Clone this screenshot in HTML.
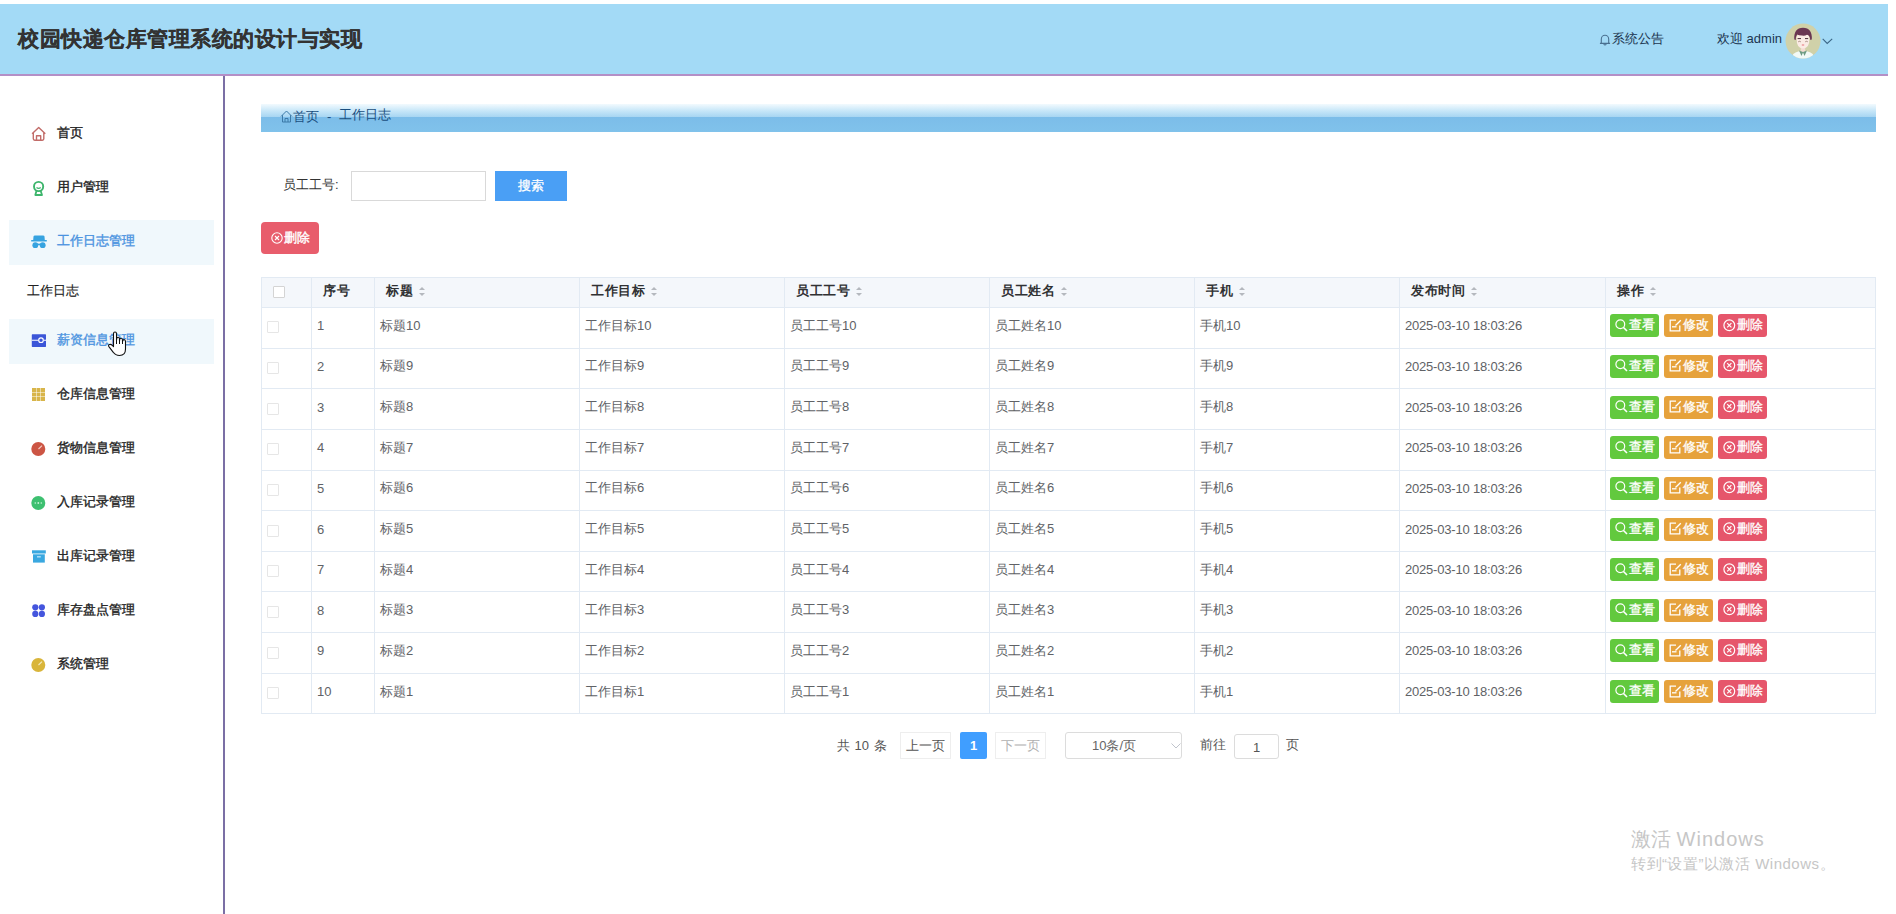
<!DOCTYPE html>
<html><head><meta charset="utf-8">
<style>
*{box-sizing:border-box;margin:0;padding:0}
html,body{width:1896px;height:914px;overflow:hidden;background:#fff;font-family:"Liberation Sans",sans-serif;}
.a{position:absolute;white-space:nowrap}
#hdr{position:absolute;left:0;top:4px;width:1888px;height:72px;background:#a3daf6;border-bottom:2px solid #b48fc6}
#title{left:18px;top:20px;letter-spacing:0.5px;font-size:21px;font-weight:bold;color:#333;-webkit-text-stroke:0.25px #333;line-height:30px}
#vline{position:absolute;left:223px;top:76px;width:2px;height:838px;background:#7b6fa5}
.mi{position:absolute;left:0;width:224px;height:20px;font-size:13px;line-height:20px;color:#222;-webkit-text-stroke-width:0.35px}
.mi .t{position:absolute;left:57px;top:0}
.ic{position:absolute;left:0;top:0}
.hl{position:absolute;left:9px;width:205px;height:45px;background:#f0f8fc}
.blue{color:#4a93e0}
#bc{left:261px;top:104px;width:1615px;height:28px;background:linear-gradient(#f2fafe 0%,#c6e6f8 25%,#a6d5f2 47%,#7cbde9 48%,#80c2eb 100%)}

.bct{font-size:13px;line-height:20px;color:#1a4f80}
table#tb{position:absolute;left:261px;top:276.5px;width:1614px;border-collapse:collapse;table-layout:fixed;font-size:13px;color:#606266}
#tb th,#tb td{border:1px solid #e2eaf3;text-align:left;white-space:nowrap;overflow:hidden}
#tb th{height:30.5px;background:#f4f7fb;color:#303133;font-weight:bold;font-size:13px;letter-spacing:0.5px;padding:0 0 2px 11px}
#tb td{height:40.65px;padding:0 0 4px 5px;vertical-align:middle}
.cb{display:inline-block;width:12px;height:12px;border:1px solid #d4d4d4;border-radius:1px;background:#fff;vertical-align:middle}
.cbr{border-color:#e6e6e6}
.srt{display:inline-block;position:relative;width:10px;height:14px;margin-left:5px;vertical-align:middle}
.srt i{position:absolute;left:1px;border-left:3.8px solid transparent;border-right:3.8px solid transparent}
.srt .up{top:2px;border-bottom:3.6px solid #b4b8be}
.srt .dn{top:8.5px;border-top:3.6px solid #b4b8be}
.ops{padding-left:4px!important}
.btn{display:inline-block;position:relative;width:49px;height:23px;border-radius:3px;color:#fff;font-size:13px;line-height:21px;padding-left:19px;-webkit-text-stroke-width:0.3px;margin-right:5px;vertical-align:middle}
.btn svg{position:absolute;left:5px;top:4.5px}
.btn.g{background:#62c93e}.btn.o{background:#e6a23c}.btn.r{background:#e6566b}
.pg{font-size:13px;line-height:20px}
.pgb{height:27px;border:1px solid #eeeeee;font-size:13px;line-height:25px;text-align:center}
</style></head><body>
<div id="hdr">
  <div class="a" id="title">校园快递仓库管理系统的设计与实现</div>
</div>
<!-- header right -->
<svg class="a" style="left:1599px;top:33px" width="12" height="13" viewBox="0 0 12 13"><path d="M2.3 9.6 V6.2 A3.7 3.9 0 0 1 9.7 6.2 V9.6 L10.6 10.4 H1.4 Z" fill="none" stroke="#4a7090" stroke-width="1.1" stroke-linejoin="round"/><path d="M4.6 11.3 Q6 12.6 7.4 11.3" fill="none" stroke="#4a7090" stroke-width="1.1"/></svg>
<div class="a" style="left:1612px;top:29px;font-size:13px;line-height:20px;color:#1c3550">系统公告</div>
<div class="a" style="left:1717px;top:29px;font-size:13px;line-height:20px;color:#1c3550">欢迎 admin</div>
<svg class="a" style="left:1785px;top:23px" width="36" height="36" viewBox="0 0 36 36">
  <defs><clipPath id="cc"><circle cx="18" cy="18" r="17.5"/></clipPath></defs>
  <circle cx="18" cy="18" r="17.5" fill="#d0d1a9"/>
  <g clip-path="url(#cc)">
    <ellipse cx="18" cy="33" rx="10.5" ry="5" fill="#f2f9f6"/>
    <rect x="15.8" y="23" width="4.4" height="6" fill="#f3dcd2"/>
    <path d="M14 27.5 L16.5 33 L18 29.5 L19.5 33 L22 27.5 L18 29 Z" fill="#6f9c84"/>
    <path d="M11.6 15 Q11.4 25.5 18 25.5 Q24.6 25.5 24.4 15 Q24 10 18 10 Q12 10 11.6 15 Z" fill="#fbebe5"/>
    <path d="M9.3 16.5 Q8.5 5 18 4.8 Q27.5 5 26.8 16.5 L25.3 17 Q25 12.5 22 11.8 Q20 13 17 12.6 Q13.5 12.3 12.2 11.5 Q10.8 13 10.8 17 Z" fill="#6a3652"/>
    <path d="M12.6 15.6 H16 M20 15.6 H23.2" stroke="#4a3038" stroke-width="1"/>
    <path d="M13.2 18.8 Q14.5 17.8 15.8 18.8 M20.2 18.8 Q21.5 17.8 22.8 18.8" stroke="#8a6a60" stroke-width="0.7" fill="none"/>
    <ellipse cx="18" cy="22" rx="1.4" ry="0.8" fill="#e98c93"/>
  </g>
</svg>
<svg class="a" style="left:1822px;top:38px" width="11" height="7" viewBox="0 0 11 7"><path d="M0.7 0.8 L5.2 5.5 L10.2 0.8" fill="none" stroke="#3a6585" stroke-width="1.1"/></svg>

<div id="vline"></div>
<div class="hl" style="top:220px"></div>
<div class="hl" style="top:319px"></div>
<div class="mi" style="top:123px">
  <svg class="ic" style="left:31px;top:3px" width="16" height="16" viewBox="0 0 16 16"><path d="M1.1 7.8 L7.7 1.4 L14.3 7.8 M2.3 6.6 V12.8 Q2.3 14.2 3.7 14.2 H11.4 Q12.8 14.2 12.8 12.8 V6.6 M5.5 14.2 V9.8 H9.7 V14.2" fill="none" stroke="#c26c69" stroke-width="1.4" stroke-linejoin="round"/></svg>
  <span class="t">首页</span></div>
<div class="mi" style="top:177px">
  <svg class="ic" style="left:32px;top:3px" width="14" height="16" viewBox="0 0 14 16"><circle cx="6.6" cy="6.5" r="4.6" fill="none" stroke="#3db56c" stroke-width="1.9"/><path d="M4.5 7.5 Q6.6 9.3 8.7 7.5" fill="none" stroke="#3db56c" stroke-width="1.2"/><path d="M4.6 10.5 L3.3 15 H10 L8.6 10.5" fill="none" stroke="#3db56c" stroke-width="1.8" stroke-linejoin="round"/></svg>
  <span class="t">用户管理</span></div>
<div class="mi" style="top:231px">
  <svg class="ic" style="left:31px;top:4px" width="16" height="14" viewBox="0 0 16 14"><path d="M2.5 1.5 Q2.6 0.6 4 0.6 H12 Q13.4 0.6 13.5 1.5 L13.8 5 H15.8 V6.6 H0.2 V5 H2.2 Z" fill="#36a3e0"/><circle cx="4.3" cy="10.2" r="2.9" fill="#36a3e0"/><circle cx="11.7" cy="10.2" r="2.9" fill="#36a3e0"/><rect x="6" y="8.6" width="4" height="1.6" fill="#36a3e0"/></svg>
  <span class="t blue">工作日志管理</span></div>
<div class="mi" style="top:281px"><span class="t" style="left:27px;-webkit-text-stroke-width:0.15px">工作日志</span></div>
<div class="mi" style="top:330px">
  <svg class="ic" style="left:31px;top:4px" width="16" height="14" viewBox="0 0 16 14"><rect x="0.8" y="0.3" width="14.2" height="12.6" rx="0.6" fill="#3b56d8"/><path d="M0.8 6.3 H7.4 M12.6 6.3 H15" stroke="#fff" stroke-width="1.1"/><circle cx="10" cy="6.2" r="2.3" fill="none" stroke="#fff" stroke-width="1.1"/></svg>
  <span class="t blue">薪资信息管理</span></div>
<div class="mi" style="top:384px">
  <svg class="ic" style="left:32px;top:4px" width="13" height="13" viewBox="0 0 13 13"><g fill="#d8b54a"><rect x="0" y="0" width="4" height="4"/><rect x="4.5" y="0" width="4" height="4"/><rect x="9" y="0" width="4" height="4"/><rect x="0" y="4.5" width="4" height="4"/><rect x="4.5" y="4.5" width="4" height="4"/><rect x="9" y="4.5" width="4" height="4"/><rect x="0" y="9" width="4" height="4"/><rect x="4.5" y="9" width="4" height="4"/><rect x="9" y="9" width="4" height="4"/></g></svg>
  <span class="t">仓库信息管理</span></div>
<div class="mi" style="top:438px">
  <svg class="ic" style="left:31px;top:4px" width="15" height="15" viewBox="0 0 15 15"><circle cx="7.3" cy="7" r="7" fill="#cc5544"/><path d="M7.5 7 L11 3.6" stroke="#f6d0c8" stroke-width="1.1"/></svg>
  <span class="t">货物信息管理</span></div>
<div class="mi" style="top:492px">
  <svg class="ic" style="left:31px;top:4px" width="15" height="15" viewBox="0 0 15 15"><circle cx="7.3" cy="7" r="7" fill="#3dc070"/><g fill="#c8f0d6"><circle cx="4.3" cy="7" r="0.8"/><circle cx="7.3" cy="7" r="0.9"/><circle cx="10.3" cy="7" r="0.8"/></g></svg>
  <span class="t">入库记录管理</span></div>
<div class="mi" style="top:546px">
  <svg class="ic" style="left:32px;top:4px" width="15" height="14" viewBox="0 0 15 14"><rect x="0" y="0.3" width="13.8" height="3.2" fill="#3aa8e0"/><rect x="1" y="4.3" width="11.8" height="8.3" fill="#3aa8e0"/><rect x="5" y="6.3" width="3.8" height="1.1" fill="#d4efff"/></svg>
  <span class="t">出库记录管理</span></div>
<div class="mi" style="top:600px">
  <svg class="ic" style="left:32px;top:4px" width="14" height="14" viewBox="0 0 14 14"><g fill="#4455dd"><circle cx="3.3" cy="3.3" r="3.1"/><circle cx="9.9" cy="3.3" r="3.1"/><circle cx="3.3" cy="9.9" r="3.1"/><circle cx="9.9" cy="9.9" r="3.1"/></g></svg>
  <span class="t">库存盘点管理</span></div>
<div class="mi" style="top:654px">
  <svg class="ic" style="left:31px;top:4px" width="15" height="15" viewBox="0 0 15 15"><circle cx="7.3" cy="7" r="7" fill="#d9b53a"/><path d="M7.5 7 L11 3.6" stroke="#f6ebc0" stroke-width="1.1"/></svg>
  <span class="t">系统管理</span></div>

<div class="a" id="bc"></div>
<svg class="a" style="left:107px;top:331px" width="21" height="27" viewBox="0 0 21 27"><path d="M6.5 12 V2.8 Q6.5 1 8 1 Q9.5 1 9.5 2.8 V9.5 Q9.5 6.2 11 6.2 Q12.5 6.2 12.5 8.2 V10 Q12.5 7.2 14 7.2 Q15.5 7.2 15.5 9.2 V10.8 Q15.5 8.6 17 8.6 Q18.5 8.6 18.5 10.6 V18 Q18.5 24.5 12.5 24.5 Q8.5 24.5 6.3 21.3 L1.9 15.6 Q1 14.2 2.4 13.6 Q3.8 13 5.3 14.4 L6.5 15.6 Z" fill="#fff" stroke="#111" stroke-width="1.1" stroke-linejoin="round"/><path d="M9.5 9.5 V13 M12.5 10 V13 M15.5 10.8 V13" stroke="#111" stroke-width="1"/></svg>


<div class="a" style="left:279.5px;top:109px"><svg width="13" height="13" viewBox="0 0 13 13"><path d="M1 6.5 L6.5 1 L12 6.5 M2.5 5.2 V12 H10.5 V5.2 M5 12 V8.5 H8 V12" fill="none" stroke="#3c7aa8" stroke-width="1"/></svg></div>
<div class="a bct" style="left:293px;top:107px">首页</div>
<div class="a bct" style="left:327px;top:107px">-</div>
<div class="a bct" style="left:339px;top:105px">工作日志</div>

<div class="a" style="left:283px;top:175px;font-size:13px;line-height:20px;color:#333">员工工号:</div>
<div class="a" style="left:351px;top:171px;width:135px;height:30px;border:1px solid #d9d9d9;background:#fff"></div>
<div class="a" style="left:495px;top:171px;width:72px;height:30px;background:#4a9ff5;color:#fff;font-size:13px;line-height:30px;text-align:center;-webkit-text-stroke-width:0.3px">搜索</div>
<div class="a delbtn" style="left:261px;top:222px;width:58px;height:32px;background:#e85d6c;border-radius:4px;color:#fff;font-size:13px;line-height:32px;padding-left:9px"><svg style="position:absolute;left:10px;top:10px" width="12" height="12" viewBox="0 0 12 12"><circle cx="6" cy="6" r="5.2" fill="none" stroke="#fff" stroke-width="1.1"/><path d="M4 4 L8 8 M8 4 L4 8" stroke="#fff" stroke-width="1.1"/></svg><span style="position:absolute;left:23px;top:0;-webkit-text-stroke-width:0.4px">删除</span></div>

<table id="tb">
<colgroup><col style="width:50px"><col style="width:63px"><col style="width:205px"><col style="width:205px"><col style="width:205px"><col style="width:205px"><col style="width:205px"><col style="width:206px"><col style="width:270px"></colgroup>
<thead><tr><th class="c0"><span class="cb"></span></th><th>序号</th><th>标题<span class="srt"><i class="up"></i><i class="dn"></i></span></th><th>工作目标<span class="srt"><i class="up"></i><i class="dn"></i></span></th><th>员工工号<span class="srt"><i class="up"></i><i class="dn"></i></span></th><th>员工姓名<span class="srt"><i class="up"></i><i class="dn"></i></span></th><th>手机<span class="srt"><i class="up"></i><i class="dn"></i></span></th><th>发布时间<span class="srt"><i class="up"></i><i class="dn"></i></span></th><th>操作<span class="srt"><i class="up"></i><i class="dn"></i></span></th></tr></thead>
<tbody>
<tr><td class="c0" style="padding-bottom:3px"><span class="cb cbr"></span></td><td>1</td><td>标题10</td><td>工作目标10</td><td>员工工号10</td><td>员工姓名10</td><td>手机10</td><td style="letter-spacing:-0.2px">2025-03-10 18:03:26</td><td class="ops"><span class="btn g"><svg width="13" height="13" viewBox="0 0 13 13"><circle cx="5.3" cy="5.3" r="4.4" fill="none" stroke="#fff" stroke-width="1.2"/><path d="M8.5 8.5 L12 12" stroke="#fff" stroke-width="1.6"/></svg>查看</span><span class="btn o"><svg width="13" height="13" viewBox="0 0 13 13"><path d="M7 1.2 H1.2 V11.8 H10.8 V6.5" fill="none" stroke="#fff" stroke-width="1.3"/><path d="M6.5 6.5 L11.8 1.2" stroke="#fff" stroke-width="1.3"/><path d="M3 7.8 H7.5" stroke="#fff" stroke-width="1.3"/></svg>修改</span><span class="btn r"><svg width="13" height="13" viewBox="0 0 13 13"><circle cx="6.3" cy="6.3" r="5.4" fill="none" stroke="#fff" stroke-width="1.2"/><path d="M4.2 4.2 L8.4 8.4 M8.4 4.2 L4.2 8.4" stroke="#fff" stroke-width="1.2"/></svg>删除</span></td></tr><tr><td class="c0" style="padding-bottom:3px"><span class="cb cbr"></span></td><td>2</td><td>标题9</td><td>工作目标9</td><td>员工工号9</td><td>员工姓名9</td><td>手机9</td><td style="letter-spacing:-0.2px">2025-03-10 18:03:26</td><td class="ops"><span class="btn g"><svg width="13" height="13" viewBox="0 0 13 13"><circle cx="5.3" cy="5.3" r="4.4" fill="none" stroke="#fff" stroke-width="1.2"/><path d="M8.5 8.5 L12 12" stroke="#fff" stroke-width="1.6"/></svg>查看</span><span class="btn o"><svg width="13" height="13" viewBox="0 0 13 13"><path d="M7 1.2 H1.2 V11.8 H10.8 V6.5" fill="none" stroke="#fff" stroke-width="1.3"/><path d="M6.5 6.5 L11.8 1.2" stroke="#fff" stroke-width="1.3"/><path d="M3 7.8 H7.5" stroke="#fff" stroke-width="1.3"/></svg>修改</span><span class="btn r"><svg width="13" height="13" viewBox="0 0 13 13"><circle cx="6.3" cy="6.3" r="5.4" fill="none" stroke="#fff" stroke-width="1.2"/><path d="M4.2 4.2 L8.4 8.4 M8.4 4.2 L4.2 8.4" stroke="#fff" stroke-width="1.2"/></svg>删除</span></td></tr><tr><td class="c0" style="padding-bottom:3px"><span class="cb cbr"></span></td><td>3</td><td>标题8</td><td>工作目标8</td><td>员工工号8</td><td>员工姓名8</td><td>手机8</td><td style="letter-spacing:-0.2px">2025-03-10 18:03:26</td><td class="ops"><span class="btn g"><svg width="13" height="13" viewBox="0 0 13 13"><circle cx="5.3" cy="5.3" r="4.4" fill="none" stroke="#fff" stroke-width="1.2"/><path d="M8.5 8.5 L12 12" stroke="#fff" stroke-width="1.6"/></svg>查看</span><span class="btn o"><svg width="13" height="13" viewBox="0 0 13 13"><path d="M7 1.2 H1.2 V11.8 H10.8 V6.5" fill="none" stroke="#fff" stroke-width="1.3"/><path d="M6.5 6.5 L11.8 1.2" stroke="#fff" stroke-width="1.3"/><path d="M3 7.8 H7.5" stroke="#fff" stroke-width="1.3"/></svg>修改</span><span class="btn r"><svg width="13" height="13" viewBox="0 0 13 13"><circle cx="6.3" cy="6.3" r="5.4" fill="none" stroke="#fff" stroke-width="1.2"/><path d="M4.2 4.2 L8.4 8.4 M8.4 4.2 L4.2 8.4" stroke="#fff" stroke-width="1.2"/></svg>删除</span></td></tr><tr><td class="c0" style="padding-bottom:3px"><span class="cb cbr"></span></td><td>4</td><td>标题7</td><td>工作目标7</td><td>员工工号7</td><td>员工姓名7</td><td>手机7</td><td style="letter-spacing:-0.2px">2025-03-10 18:03:26</td><td class="ops"><span class="btn g"><svg width="13" height="13" viewBox="0 0 13 13"><circle cx="5.3" cy="5.3" r="4.4" fill="none" stroke="#fff" stroke-width="1.2"/><path d="M8.5 8.5 L12 12" stroke="#fff" stroke-width="1.6"/></svg>查看</span><span class="btn o"><svg width="13" height="13" viewBox="0 0 13 13"><path d="M7 1.2 H1.2 V11.8 H10.8 V6.5" fill="none" stroke="#fff" stroke-width="1.3"/><path d="M6.5 6.5 L11.8 1.2" stroke="#fff" stroke-width="1.3"/><path d="M3 7.8 H7.5" stroke="#fff" stroke-width="1.3"/></svg>修改</span><span class="btn r"><svg width="13" height="13" viewBox="0 0 13 13"><circle cx="6.3" cy="6.3" r="5.4" fill="none" stroke="#fff" stroke-width="1.2"/><path d="M4.2 4.2 L8.4 8.4 M8.4 4.2 L4.2 8.4" stroke="#fff" stroke-width="1.2"/></svg>删除</span></td></tr><tr><td class="c0" style="padding-bottom:3px"><span class="cb cbr"></span></td><td>5</td><td>标题6</td><td>工作目标6</td><td>员工工号6</td><td>员工姓名6</td><td>手机6</td><td style="letter-spacing:-0.2px">2025-03-10 18:03:26</td><td class="ops"><span class="btn g"><svg width="13" height="13" viewBox="0 0 13 13"><circle cx="5.3" cy="5.3" r="4.4" fill="none" stroke="#fff" stroke-width="1.2"/><path d="M8.5 8.5 L12 12" stroke="#fff" stroke-width="1.6"/></svg>查看</span><span class="btn o"><svg width="13" height="13" viewBox="0 0 13 13"><path d="M7 1.2 H1.2 V11.8 H10.8 V6.5" fill="none" stroke="#fff" stroke-width="1.3"/><path d="M6.5 6.5 L11.8 1.2" stroke="#fff" stroke-width="1.3"/><path d="M3 7.8 H7.5" stroke="#fff" stroke-width="1.3"/></svg>修改</span><span class="btn r"><svg width="13" height="13" viewBox="0 0 13 13"><circle cx="6.3" cy="6.3" r="5.4" fill="none" stroke="#fff" stroke-width="1.2"/><path d="M4.2 4.2 L8.4 8.4 M8.4 4.2 L4.2 8.4" stroke="#fff" stroke-width="1.2"/></svg>删除</span></td></tr><tr><td class="c0" style="padding-bottom:3px"><span class="cb cbr"></span></td><td>6</td><td>标题5</td><td>工作目标5</td><td>员工工号5</td><td>员工姓名5</td><td>手机5</td><td style="letter-spacing:-0.2px">2025-03-10 18:03:26</td><td class="ops"><span class="btn g"><svg width="13" height="13" viewBox="0 0 13 13"><circle cx="5.3" cy="5.3" r="4.4" fill="none" stroke="#fff" stroke-width="1.2"/><path d="M8.5 8.5 L12 12" stroke="#fff" stroke-width="1.6"/></svg>查看</span><span class="btn o"><svg width="13" height="13" viewBox="0 0 13 13"><path d="M7 1.2 H1.2 V11.8 H10.8 V6.5" fill="none" stroke="#fff" stroke-width="1.3"/><path d="M6.5 6.5 L11.8 1.2" stroke="#fff" stroke-width="1.3"/><path d="M3 7.8 H7.5" stroke="#fff" stroke-width="1.3"/></svg>修改</span><span class="btn r"><svg width="13" height="13" viewBox="0 0 13 13"><circle cx="6.3" cy="6.3" r="5.4" fill="none" stroke="#fff" stroke-width="1.2"/><path d="M4.2 4.2 L8.4 8.4 M8.4 4.2 L4.2 8.4" stroke="#fff" stroke-width="1.2"/></svg>删除</span></td></tr><tr><td class="c0" style="padding-bottom:3px"><span class="cb cbr"></span></td><td>7</td><td>标题4</td><td>工作目标4</td><td>员工工号4</td><td>员工姓名4</td><td>手机4</td><td style="letter-spacing:-0.2px">2025-03-10 18:03:26</td><td class="ops"><span class="btn g"><svg width="13" height="13" viewBox="0 0 13 13"><circle cx="5.3" cy="5.3" r="4.4" fill="none" stroke="#fff" stroke-width="1.2"/><path d="M8.5 8.5 L12 12" stroke="#fff" stroke-width="1.6"/></svg>查看</span><span class="btn o"><svg width="13" height="13" viewBox="0 0 13 13"><path d="M7 1.2 H1.2 V11.8 H10.8 V6.5" fill="none" stroke="#fff" stroke-width="1.3"/><path d="M6.5 6.5 L11.8 1.2" stroke="#fff" stroke-width="1.3"/><path d="M3 7.8 H7.5" stroke="#fff" stroke-width="1.3"/></svg>修改</span><span class="btn r"><svg width="13" height="13" viewBox="0 0 13 13"><circle cx="6.3" cy="6.3" r="5.4" fill="none" stroke="#fff" stroke-width="1.2"/><path d="M4.2 4.2 L8.4 8.4 M8.4 4.2 L4.2 8.4" stroke="#fff" stroke-width="1.2"/></svg>删除</span></td></tr><tr><td class="c0" style="padding-bottom:3px"><span class="cb cbr"></span></td><td>8</td><td>标题3</td><td>工作目标3</td><td>员工工号3</td><td>员工姓名3</td><td>手机3</td><td style="letter-spacing:-0.2px">2025-03-10 18:03:26</td><td class="ops"><span class="btn g"><svg width="13" height="13" viewBox="0 0 13 13"><circle cx="5.3" cy="5.3" r="4.4" fill="none" stroke="#fff" stroke-width="1.2"/><path d="M8.5 8.5 L12 12" stroke="#fff" stroke-width="1.6"/></svg>查看</span><span class="btn o"><svg width="13" height="13" viewBox="0 0 13 13"><path d="M7 1.2 H1.2 V11.8 H10.8 V6.5" fill="none" stroke="#fff" stroke-width="1.3"/><path d="M6.5 6.5 L11.8 1.2" stroke="#fff" stroke-width="1.3"/><path d="M3 7.8 H7.5" stroke="#fff" stroke-width="1.3"/></svg>修改</span><span class="btn r"><svg width="13" height="13" viewBox="0 0 13 13"><circle cx="6.3" cy="6.3" r="5.4" fill="none" stroke="#fff" stroke-width="1.2"/><path d="M4.2 4.2 L8.4 8.4 M8.4 4.2 L4.2 8.4" stroke="#fff" stroke-width="1.2"/></svg>删除</span></td></tr><tr><td class="c0" style="padding-bottom:3px"><span class="cb cbr"></span></td><td>9</td><td>标题2</td><td>工作目标2</td><td>员工工号2</td><td>员工姓名2</td><td>手机2</td><td style="letter-spacing:-0.2px">2025-03-10 18:03:26</td><td class="ops"><span class="btn g"><svg width="13" height="13" viewBox="0 0 13 13"><circle cx="5.3" cy="5.3" r="4.4" fill="none" stroke="#fff" stroke-width="1.2"/><path d="M8.5 8.5 L12 12" stroke="#fff" stroke-width="1.6"/></svg>查看</span><span class="btn o"><svg width="13" height="13" viewBox="0 0 13 13"><path d="M7 1.2 H1.2 V11.8 H10.8 V6.5" fill="none" stroke="#fff" stroke-width="1.3"/><path d="M6.5 6.5 L11.8 1.2" stroke="#fff" stroke-width="1.3"/><path d="M3 7.8 H7.5" stroke="#fff" stroke-width="1.3"/></svg>修改</span><span class="btn r"><svg width="13" height="13" viewBox="0 0 13 13"><circle cx="6.3" cy="6.3" r="5.4" fill="none" stroke="#fff" stroke-width="1.2"/><path d="M4.2 4.2 L8.4 8.4 M8.4 4.2 L4.2 8.4" stroke="#fff" stroke-width="1.2"/></svg>删除</span></td></tr><tr><td class="c0" style="padding-bottom:3px"><span class="cb cbr"></span></td><td>10</td><td>标题1</td><td>工作目标1</td><td>员工工号1</td><td>员工姓名1</td><td>手机1</td><td style="letter-spacing:-0.2px">2025-03-10 18:03:26</td><td class="ops"><span class="btn g"><svg width="13" height="13" viewBox="0 0 13 13"><circle cx="5.3" cy="5.3" r="4.4" fill="none" stroke="#fff" stroke-width="1.2"/><path d="M8.5 8.5 L12 12" stroke="#fff" stroke-width="1.6"/></svg>查看</span><span class="btn o"><svg width="13" height="13" viewBox="0 0 13 13"><path d="M7 1.2 H1.2 V11.8 H10.8 V6.5" fill="none" stroke="#fff" stroke-width="1.3"/><path d="M6.5 6.5 L11.8 1.2" stroke="#fff" stroke-width="1.3"/><path d="M3 7.8 H7.5" stroke="#fff" stroke-width="1.3"/></svg>修改</span><span class="btn r"><svg width="13" height="13" viewBox="0 0 13 13"><circle cx="6.3" cy="6.3" r="5.4" fill="none" stroke="#fff" stroke-width="1.2"/><path d="M4.2 4.2 L8.4 8.4 M8.4 4.2 L4.2 8.4" stroke="#fff" stroke-width="1.2"/></svg>删除</span></td></tr>
</tbody></table>

<div class="a pg" style="left:837px;top:736px;color:#555;word-spacing:1px">共 10 条</div>
<div class="a pgb" style="left:900px;top:732px;width:51px;color:#555">上一页</div>
<div class="a" style="left:960px;top:732px;width:27px;height:27px;background:#409eff;border-radius:2px;color:#fff;font-weight:bold;font-size:13px;line-height:27px;text-align:center">1</div>
<div class="a pgb" style="left:995px;top:732px;width:51px;color:#b0b0b0">下一页</div>
<div class="a" style="left:1065px;top:732px;width:117px;height:27px;border:1px solid #dcdcdc;border-radius:3px;font-size:13px;line-height:25px;color:#666;padding-left:26px">10条/页<svg style="position:absolute;left:105px;top:10px" width="10" height="6" viewBox="0 0 10 6"><path d="M0.5 0.5 L5 5 L9.5 0.5" fill="none" stroke="#c0c4cc" stroke-width="1"/></svg></div>
<div class="a pg" style="left:1200px;top:735px;color:#555">前往</div>
<div class="a" style="left:1234px;top:734px;width:45px;height:25px;border:1px solid #dcdcdc;border-radius:3px;font-size:13px;line-height:25px;color:#555;text-align:center">1</div>
<div class="a pg" style="left:1286px;top:735px;color:#555">页</div>

<div class="a" style="left:1631px;top:826px;font-size:20px;line-height:26px;color:#c6c6c6">激活 <span style="letter-spacing:1px">Windows</span></div>
<div class="a" style="left:1631px;top:854px;font-size:15px;line-height:20px;color:#c6c6c6;letter-spacing:0.5px">转到“设置”以激活 Windows。</div>
</body></html>
